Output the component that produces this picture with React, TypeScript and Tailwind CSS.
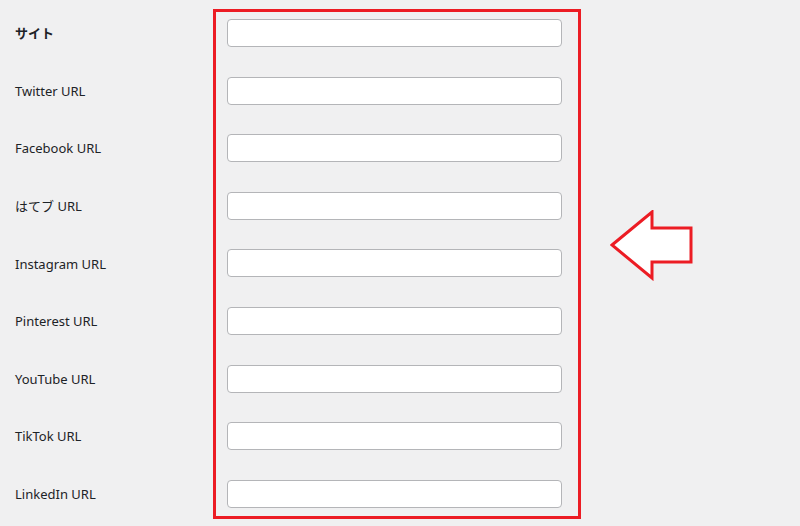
const fields = [
  { label: "サイト", bold: true },
  { label: "Twitter URL" },
  { label: "Facebook URL" },
  { label: "はてブ URL" },
  { label: "Instagram URL" },
  { label: "Pinterest URL" },
  { label: "YouTube URL" },
  { label: "TikTok URL" },
  { label: "LinkedIn URL" },
];

const ArrowLeft = () => (
  <svg width="84" height="71" viewBox="0 0 84 71" fill="none">
    <path
      d="M2 35 L42 2 L42 18 L81 18 L81 52 L42 52 L42 68 Z"
      fill="#ffffff"
      stroke="#ec1c24"
      strokeWidth="3"
      strokeLinejoin="miter"
    />
  </svg>
);

export default function App() {
  return (
    <div
      className="flex h-[526px] w-[800px] overflow-hidden bg-[#f0f0f1] text-[#1d2327]"
      style={{ fontFamily: '"Noto Sans", "Noto Sans CJK JP", sans-serif' }}
    >
      {/* labels */}
      <div className="mt-[20px] flex w-[213px] shrink-0 flex-col gap-[29.6px] pl-[15px]">
        {fields.map((f) => (
          <div
            key={f.label}
            className={`flex h-[28px] items-center text-[13px] ${f.bold ? "font-bold" : ""}`}
          >
            {f.label}
          </div>
        ))}
      </div>

      {/* highlighted inputs column */}
      <div className="mt-[9px] flex h-[510px] w-[368px] shrink-0 flex-col gap-[29.6px] border-[3px] border-[#ec1c24] pl-[11px] pr-[16px] pt-[7px]">
        {fields.map((f) => (
          <input
            key={f.label}
            type="text"
            className="h-[28px] w-full rounded-[4px] border border-[#b4b5b8] bg-white"
          />
        ))}
      </div>

      <div className="ml-[29px] mt-[210px]">
        <ArrowLeft />
      </div>
    </div>
  );
}
